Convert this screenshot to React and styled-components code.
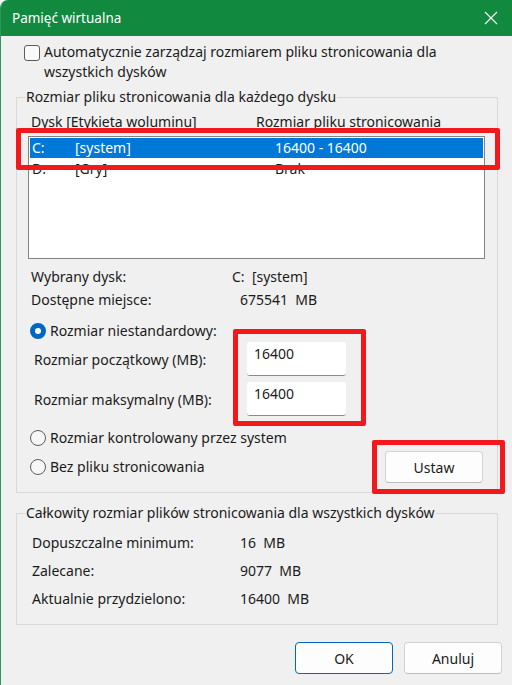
import React from 'react';
import styled, { createGlobalStyle } from 'styled-components';

const GlobalStyle = createGlobalStyle`
  html, body {
    margin: 0;
    padding: 0;
    background: #ffffff;
  }
  body {
    font-family: 'Noto Sans', 'Segoe UI', sans-serif;
    font-size: 14px;
    color: #1b1b1b;
  }
`;

const drives = [
  { letter: 'C:', label: '[system]', size: '16400 - 16400', selected: true },
  { letter: 'D:', label: '[Gry]', size: 'Brak', selected: false },
];

const totals = [
  { label: 'Dopuszczalne minimum:', value: '16  MB' },
  { label: 'Zalecane:', value: '9077  MB' },
  { label: 'Aktualnie przydzielono:', value: '16400  MB' },
];

function CloseIcon() {
  return (
    <svg width="14" height="14" viewBox="0 0 14 14">
      <path d="M1 1 L13 13 M13 1 L1 13" stroke="#ffffff" strokeWidth="1.1" fill="none" />
    </svg>
  );
}

export default function App() {
  return (
    <>
      <GlobalStyle />
      <Window>
        <TitleBar>
          <Title>Pamięć wirtualna</Title>
          <CloseIcon />
        </TitleBar>

        <Body>
          <CheckRow>
            <CheckBox />
            <CheckText>
              Automatycznie zarządzaj rozmiarem pliku stronicowania dla<br />
              wszystkich dysków
            </CheckText>
          </CheckRow>

          <Group>
            <Legend>Rozmiar pliku stronicowania dla każdego dysku</Legend>
            <HeaderRow>
              <span>Dysk [Etykieta woluminu]</span>
              <span>Rozmiar pliku stronicowania</span>
            </HeaderRow>
            <ListBox>
              {drives.map((d) => (
                <DriveRow key={d.letter} $selected={d.selected}>
                  <span>{d.letter}</span>
                  <span>{d.label}</span>
                  <span>{d.size}</span>
                </DriveRow>
              ))}
            </ListBox>

            <InfoRow>
              <span>Wybrany dysk:</span>
              <Value>C:  [system]</Value>
            </InfoRow>
            <InfoRow $shift={8} $gap={3}>
              <span>Dostępne miejsce:</span>
              <Value>675541  MB</Value>
            </InfoRow>

            <RadioRow $top={11}>
              <Radio $checked />
              <span>Rozmiar niestandardowy:</span>
            </RadioRow>
            <SizeRow $top={1}>
              <span>Rozmiar początkowy (MB):</span>
              <SizeInput readOnly value="16400" />
            </SizeRow>
            <SizeRow $top={6}>
              <span>Rozmiar maksymalny (MB):</span>
              <SizeInput readOnly value="16400" />
            </SizeRow>

            <RadioRow $top={12}>
              <Radio />
              <span>Rozmiar kontrolowany przez system</span>
            </RadioRow>
            <LastRow>
              <RadioRow $top={0}>
                <Radio />
                <span>Bez pliku stronicowania</span>
              </RadioRow>
              <Button>Ustaw</Button>
            </LastRow>
          </Group>

          <Group $top={10} $bottom={15}>
            <Legend>Całkowity rozmiar plików stronicowania dla wszystkich dysków</Legend>
            {totals.map((t, i) => (
              <TotalRow key={t.label} $top={i === 0 ? 10 : 8}>
                <span>{t.label}</span>
                <Value>{t.value}</Value>
              </TotalRow>
            ))}
          </Group>

          <Footer>
            <Button $primary>OK</Button>
            <Button>Anuluj</Button>
          </Footer>
        </Body>

        <Highlight style={{ left: 15, top: 128, width: 484, height: 42 }} />
        <Highlight style={{ left: 232, top: 329, width: 133, height: 97 }} />
        <Highlight style={{ left: 371, top: 440, width: 133, height: 54 }} />
      </Window>
    </>
  );
}

const Window = styled.div`
  position: relative;
  width: 512px;
  height: 685px;
  overflow: hidden;
  background: #f0f0f0;
  border-top-left-radius: 8px;
  border-left: 1px solid #2f9460;
  box-sizing: border-box;
`;

const TitleBar = styled.div`
  height: 36px;
  display: flex;
  align-items: center;
  justify-content: space-between;
  padding: 0 14px 0 11px;
  background: #11893f;
`;

const Title = styled.span`
  color: #ffffff;
  font-size: 13.5px;
`;

const Body = styled.div`
  padding: 6px 14px 0 15px;
`;

const CheckRow = styled.div`
  display: flex;
  align-items: flex-start;
  gap: 4px;
  padding-left: 8px;
`;

const CheckBox = styled.div`
  width: 16px;
  height: 16px;
  margin-top: 3px;
  box-sizing: border-box;
  border: 1px solid #5c5c5c;
  border-radius: 3px;
  background: #f9f9f9;
  flex: none;
`;

const CheckText = styled.div`
  line-height: 20px;
`;

const Group = styled.fieldset`
  margin: ${(p) => p.$top ?? 5}px 0 0 0;
  padding: 0 11px ${(p) => p.$bottom ?? 9}px 11px;
  border: 1px solid #d9d9d9;
  min-width: 0;
`;

const Legend = styled.legend`
  margin-left: -3px;
  padding: 0 1px;
  line-height: 20px;
`;

const HeaderRow = styled.div`
  display: grid;
  grid-template-columns: 225px 1fr;
  margin-top: 5px;
  padding-left: 3px;
  line-height: 20px;
`;

const ListBox = styled.div`
  margin-top: 4px;
  width: 457px;
  height: 123px;
  box-sizing: border-box;
  border: 1px solid #828282;
  background: #ffffff;
  padding: 1px;
`;

const DriveRow = styled.div`
  display: grid;
  grid-template-columns: 43px 200px 1fr;
  height: 20px;
  margin-bottom: 1px;
  padding-left: 2px;
  line-height: 20px;
  background: ${(p) => (p.$selected ? '#0078d7' : 'transparent')};
  color: ${(p) => (p.$selected ? '#ffffff' : '#1b1b1b')};
`;

const Value = styled.span`
  white-space: pre;
`;

const InfoRow = styled.div`
  display: grid;
  grid-template-columns: ${(p) => 201 + (p.$shift || 0)}px 1fr;
  margin-top: ${(p) => p.$gap ?? 8}px;
  padding-left: 3px;
  line-height: 20px;
`;

const RadioRow = styled.div`
  display: flex;
  align-items: center;
  gap: 4px;
  margin-top: ${(p) => p.$top}px;
  padding-left: 2px;
  line-height: 20px;
`;

const Radio = styled.span`
  width: 16px;
  height: 16px;
  flex: none;
  box-sizing: border-box;
  border-radius: 50%;
  border: ${(p) => (p.$checked ? '5px solid #0067c0' : '1px solid #5c5c5c')};
  background: ${(p) => (p.$checked ? '#ffffff' : '#f7f7f7')};
`;

const SizeRow = styled.div`
  display: grid;
  grid-template-columns: 213px 99px;
  align-items: center;
  margin-top: ${(p) => p.$top}px;
  padding-left: 6px;
`;

const SizeInput = styled.input`
  width: 99px;
  height: 34px;
  box-sizing: border-box;
  padding: 2px 7px 12px;
  border: none;
  border-bottom: 1px solid #8a8a8a;
  border-radius: 3px;
  background: #ffffff;
  font: inherit;
  color: #1b1b1b;
  outline: none;
`;

const LastRow = styled.div`
  display: flex;
  align-items: center;
  justify-content: space-between;
  margin-top: 3px;
  padding-right: 3px;
`;

const Button = styled.button`
  width: 98px;
  height: 32px;
  box-sizing: border-box;
  border: 1px solid ${(p) => (p.$primary ? '#0067c0' : '#d3d3d3')};
  border-bottom-color: ${(p) => (p.$primary ? '#0067c0' : '#bdbdbd')};
  border-radius: 4px;
  background: #fdfdfd;
  font: inherit;
  color: #1b1b1b;
  padding: 0;
`;

const TotalRow = styled.div`
  display: grid;
  grid-template-columns: 208px 1fr;
  margin-top: ${(p) => p.$top}px;
  padding-left: 4px;
  line-height: 20px;
`;

const Footer = styled.div`
  display: flex;
  justify-content: flex-end;
  gap: 11px;
  margin: 17px -4px 0 0;
`;

const Highlight = styled.div`
  position: absolute;
  box-sizing: border-box;
  border: 5px solid #f2191c;
  border-radius: 2px;
  pointer-events: none;
`;
